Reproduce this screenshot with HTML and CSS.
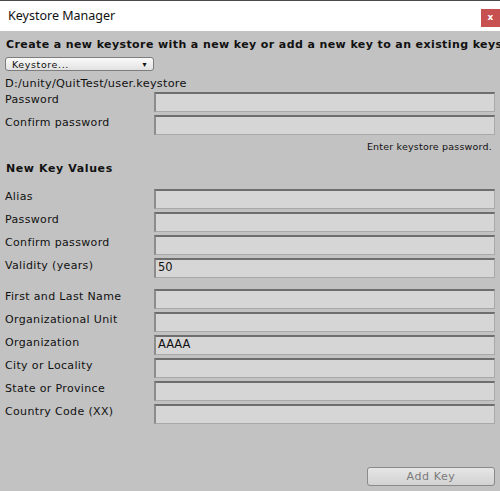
FILE: index.html
```html
<!DOCTYPE html>
<html>
<head>
<meta charset="utf-8">
<link rel="stylesheet" href="styles.css">
</head>
<body>
<div class="window">
  <div class="titlebar">
    <span class="title">Keystore Manager</span>
    <span class="close">x</span>
  </div>
  <div class="content">
    <div class="heading">Create a new keystore with a new key or add a new key to an existing keystore</div>
    <div class="dropdown"><span>Keystore...</span><span class="arrow">▾</span></div>
    <div class="path">D:/unity/QuitTest/user.keystore</div>
    <div class="group g-store">
      <div class="row"><label>Password</label><div class="field"></div></div>
      <div class="row"><label>Confirm password</label><div class="field"></div></div>
    </div>
    <div class="help">Enter keystore password.</div>
    <div class="heading2">New Key Values</div>
    <div class="group g-key">
      <div class="row"><label>Alias</label><div class="field"></div></div>
      <div class="row"><label>Password</label><div class="field"></div></div>
      <div class="row"><label>Confirm password</label><div class="field"></div></div>
      <div class="row"><label>Validity (years)</label><div class="field">50</div></div>
    </div>
    <div class="group g-dn">
      <div class="row"><label>First and Last Name</label><div class="field"></div></div>
      <div class="row"><label>Organizational Unit</label><div class="field"></div></div>
      <div class="row"><label>Organization</label><div class="field">AAAA</div></div>
      <div class="row"><label>City or Locality</label><div class="field"></div></div>
      <div class="row"><label>State or Province</label><div class="field"></div></div>
      <div class="row"><label>Country Code (XX)</label><div class="field"></div></div>
    </div>
    <div class="footer"><div class="button">Add Key</div></div>
  </div>
</div>
</body>
</html>
```

FILE: styles.css
```css
html, body {
  margin: 0;
  padding: 0;
  width: 500px;
  height: 491px;
  overflow: hidden;
}
.window {
  display: flex;
  flex-direction: column;
  height: 491px;
  background: #c2c2c2;
  font-family: "DejaVu Sans", sans-serif;
  font-size: 11px;
  color: #111;
}
.titlebar {
  height: 30px;
  border-top: 1px solid #4a4a4a;
  background: #ffffff;
  display: flex;
  align-items: flex-start;
  justify-content: space-between;
}
.title {
  font-family: "Noto Sans", sans-serif;
  font-size: 12.5px;
  color: #111;
  margin: 6px 0 0 8px;
}
.close {
  width: 19px;
  height: 18px;
  margin-top: 8px;
  background: #c75050;
  color: #fff;
  font-family: "DejaVu Sans", sans-serif;
  font-weight: bold;
  font-size: 9px;
  line-height: 17px;
  text-align: center;
}
.content {
  flex: 1;
  display: flex;
  flex-direction: column;
  padding: 6px 5px 5px 5px;
  overflow: hidden;
}
.heading {
  font-weight: bold;
  line-height: 16px;
  white-space: nowrap;
  overflow: hidden;
  letter-spacing: 0.4px;
  margin-left: 1px;
  margin-right: -5px;
}
.dropdown {
  margin-top: 4px;
  width: 141px;
  height: 12px;
  border: 1px solid #7d7d7d;
  border-radius: 3px;
  background: linear-gradient(#fafafa, #e2e2e2);
  display: flex;
  justify-content: space-between;
  align-items: center;
  font-size: 9.5px;
  letter-spacing: 0.6px;
  padding: 0 0 0 6px;
  box-sizing: content-box;
}
.dropdown .arrow {
  font-size: 8px;
  margin-right: 6px;
}
.path {
  margin-top: 5px;
  line-height: 16px;
  font-size: 11.3px;
  letter-spacing: 0.25px;
}
.group {
  display: flex;
  flex-direction: column;
  gap: 3px;
}
.g-store {
  margin-top: 0;
}
.row {
  display: flex;
  align-items: flex-start;
  height: 20px;
}
.row label {
  width: 149px;
  line-height: 16px;
  letter-spacing: 0.35px;
}
.field {
  flex: 1;
  height: 20px;
  box-sizing: border-box;
  background: #d6d6d6;
  border-top: 2px solid #6e6e6e;
  border-left: 2px solid #8c8c8c;
  border-right: 1px solid #a8a8a8;
  border-bottom: 1px solid #a8a8a8;
  padding: 0 0 0 2px;
  line-height: 15px;
  font-size: 11.5px;
  color: #111;
}
.help {
  margin-top: 5px;
  font-size: 9.5px;
  line-height: 14px;
  text-align: right;
  padding-right: 3px;
  letter-spacing: 0.2px;
}
.heading2 {
  margin-top: 7px;
  font-weight: bold;
  line-height: 16px;
  letter-spacing: 0.6px;
  margin-left: 1px;
}
.g-key {
  margin-top: 12px;
}
.g-dn {
  margin-top: 11px;
}
.footer {
  margin-top: auto;
  display: flex;
  justify-content: flex-end;
}
.button {
  width: 126px;
  height: 17px;
  border: 1px solid #8a8a8a;
  border-radius: 3px;
  background: linear-gradient(#e6e6e6, #d2d2d2);
  color: #7a7a7a;
  text-align: center;
  line-height: 17px;
  letter-spacing: 0.6px;
  font-size: 11px;
}
```
